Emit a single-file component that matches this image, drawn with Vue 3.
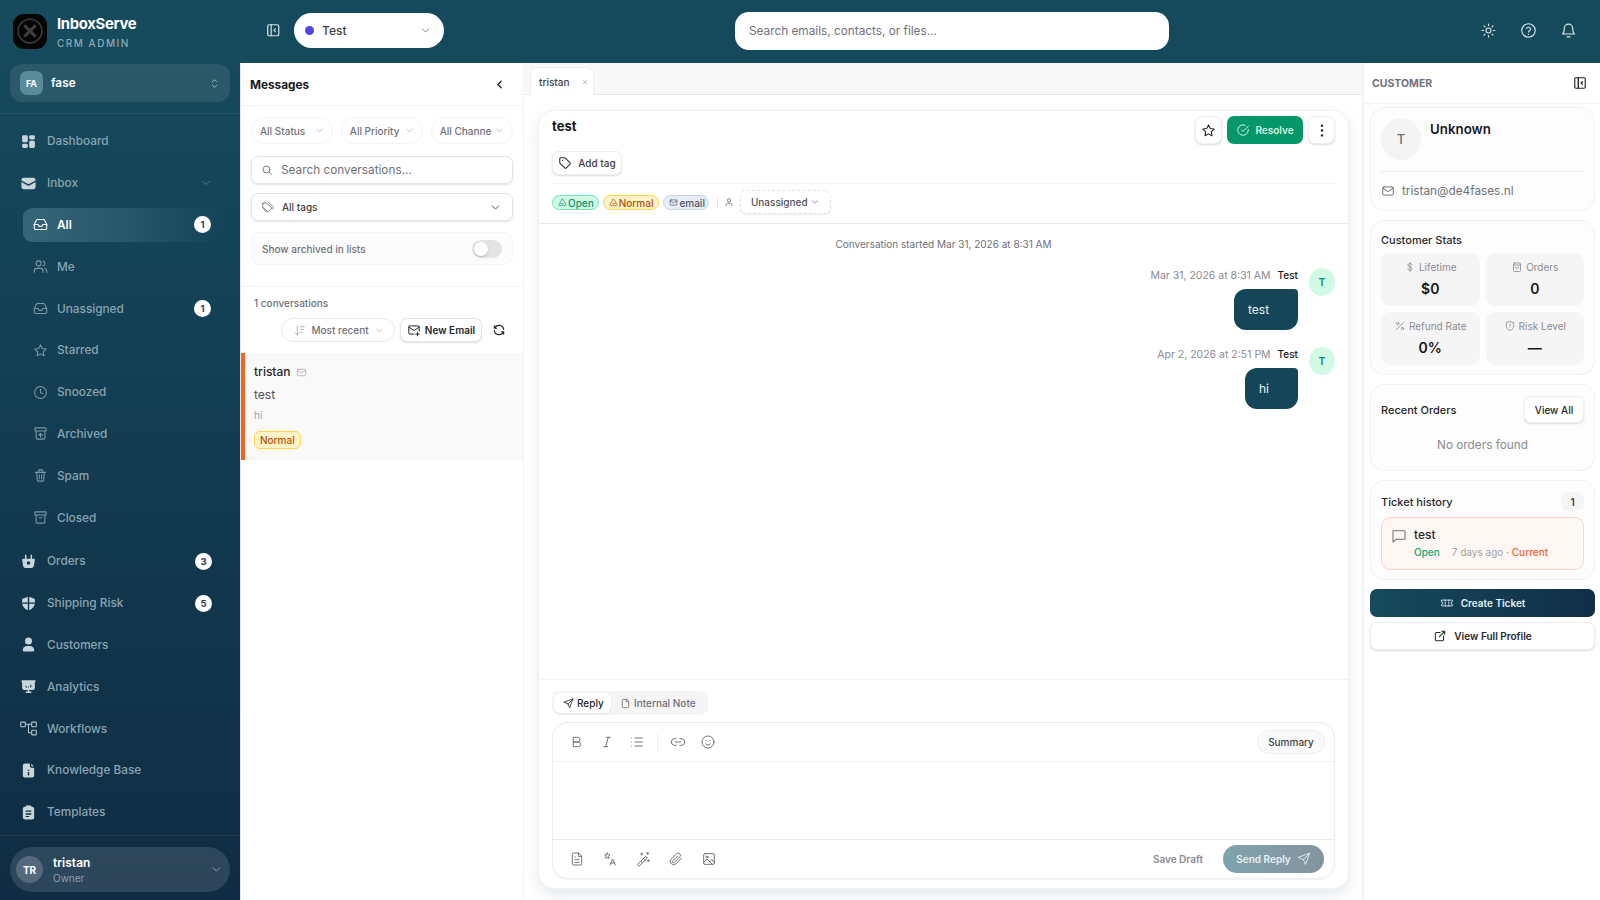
<script setup>
const icons = {
  chevDown: '<path d="M6 9l6 6 6-6"/>',
  chevLeft: '<path d="M15 6l-6 6 6 6"/>',
  upDown: '<path d="M8 9l4-4 4 4M8 15l4 4 4-4"/>',
  collapse: '<rect x="4" y="4" width="16" height="16" rx="2"/><path d="M9 4v16M15 10l-2 2 2 2"/>',
  sun: '<circle cx="12" cy="12" r="3.5"/><path d="M12 3v2M12 19v2M3 12h2M19 12h2M5.6 5.6l1.4 1.4M17 17l1.4 1.4M5.6 18.4L7 17M17 7l1.4-1.4"/>',
  help: '<circle cx="12" cy="12" r="9.5"/><path d="M9.2 9.2a2.9 2.9 0 0 1 5.6 1c0 2-2.8 2.4-2.8 4M12 17.5v.1"/>',
  bell: '<path d="M6 9a6 6 0 0 1 12 0c0 6 2.5 8 2.5 8h-17S6 15 6 9zM10 21h4"/>',
  search: '<circle cx="11" cy="11" r="7"/><path d="M21 21l-5-5"/>',
  tags: '<path d="M7.5 7h.01M3 6v5.2a2 2 0 0 0 .6 1.4l6.8 6.8a2 2 0 0 0 2.8 0l4.2-4.2a2 2 0 0 0 0-2.8L9.6 5.6A2 2 0 0 0 8.2 5H4a1 1 0 0 0-1 1z"/><path d="M3 13l6 7M13 4l7.5 7.5a2 2 0 0 1 0 2.8L19 16"/>',
  tag: '<path d="M7.5 7.5h.01M3 5v6.2a2 2 0 0 0 .6 1.4l7.8 7.8a2 2 0 0 0 2.8 0l6.2-6.2a2 2 0 0 0 0-2.8L12.6 3.6A2 2 0 0 0 11.2 3H5a2 2 0 0 0-2 2z"/>',
  sort: '<path d="M8 4v16M4 16l4 4 4-4M14 5h7M14 10h5M14 15h3"/>',
  mailPlus: '<path d="M12 19H5a2 2 0 0 1-2-2V7a2 2 0 0 1 2-2h14a2 2 0 0 1 2 2v7"/><path d="M3 7l9 6 9-6M18 16v6M15 19h6"/>',
  refresh: '<path d="M20 11A8.1 8.1 0 0 0 4.5 9M4 5v4h4M4 13a8.1 8.1 0 0 0 15.5 2M20 19v-4h-4"/>',
  mail: '<rect x="3" y="5" width="18" height="14" rx="2"/><path d="M3 7l9 6 9-6"/>',
  x: '<path d="M6 6l12 12M18 6L6 18"/>',
  star: '<polygon points="12 3 14.8 8.8 21 9.7 16.5 14.1 17.6 20.4 12 17.4 6.4 20.4 7.5 14.1 3 9.7 9.2 8.8"/>',
  check: '<path d="M21 11v1a9 9 0 1 1-5.3-8.2"/><path d="M9 11.5l3 3L21.5 5"/>',
  triangle: '<path d="M10.3 4.3L2.6 17.5A2 2 0 0 0 4.3 20.5h15.4a2 2 0 0 0 1.7-3L13.7 4.3a2 2 0 0 0-3.4 0zM8 15h8"/>',
  user: '<circle cx="12" cy="8" r="4"/><path d="M5 21v-2a4 4 0 0 1 4-4h6a4 4 0 0 1 4 4v2"/>',
  send: '<path d="M21.5 2.5L14.5 21.5l-3.5-8.5-8.5-3.5zM21.5 2.5L11 13"/>',
  note: '<path d="M14 3H7a2 2 0 0 0-2 2v14a2 2 0 0 0 2 2h10a2 2 0 0 0 2-2V8zM14 3v5h5"/>',
  bold: '<path d="M7 5h6a3.5 3.5 0 0 1 0 7H7zM7 12h7a3.5 3.5 0 0 1 0 7H7z"/>',
  italic: '<path d="M11 5h6M7 19h6M14 5l-4 14"/>',
  list: '<path d="M9 6h11M9 12h11M9 18h11M4 6v.01M4 12v.01M4 18v.01"/>',
  link: '<path d="M9 17H7a5 5 0 0 1 0-10h2M15 7h2a5 5 0 0 1 0 10h-2M8 12h8"/>',
  smile: '<circle cx="12" cy="12" r="9"/><path d="M9 10v.01M15 10v.01M8.5 14.5a4 4 0 0 0 7 0"/>',
  fileText: '<path d="M14 3H7a2 2 0 0 0-2 2v14a2 2 0 0 0 2 2h10a2 2 0 0 0 2-2V8zM14 3v5h5M9 13h6M9 17h6M9 9h1"/>',
  lang: '<path d="M8 3l1.2 2.6L12 6l-2 2 .5 3L8 9.6 5.5 11l.5-3-2-2 2.8-.4zM12 21l4-9 4 9M13.5 18h5"/>',
  wand: '<path d="M4 20L16 8l2.5 2.5L6.5 22.5zM13 11l2.5 2.5M8 15l2.5 2.5M10 3v3M8.5 4.5h3M19 2v3M17.5 3.5h3M20 13v3M18.5 14.5h3"/>',
  clip: '<path d="M20 11l-8.5 8.5a5 5 0 0 1-7-7L13 4a3.4 3.4 0 0 1 4.8 4.8l-8.5 8.5a1.7 1.7 0 0 1-2.4-2.4L15 7.5"/>',
  image: '<rect x="4" y="4" width="16" height="16" rx="2"/><circle cx="9" cy="9" r="1.5"/><path d="M4 17l5-5 8 8M14 15l2-2 4 4"/>',
  ticket: '<path d="M3 7h18v3a2 2 0 0 0 0 4v3H3v-3a2 2 0 0 0 0-4zM9 7v2M9 11v2M9 15v2M15 7v2M15 11v2M15 15v2"/>',
  external: '<path d="M12 6H6a2 2 0 0 0-2 2v10a2 2 0 0 0 2 2h10a2 2 0 0 0 2-2v-6M11 13l9-9M15 4h5v5"/>',
  message: '<path d="M4 4h16a1 1 0 0 1 1 1v11a1 1 0 0 1-1 1H8l-5 4V5a1 1 0 0 1 1-1z"/>',
  dollar: '<path d="M16 7.5C16 6 14.5 5 12 5S8 6.2 8 8.2c0 4.3 8 2.8 8 7 0 2-1.7 3.3-4 3.3s-4-1.2-4-3M12 3v18"/>',
  bag: '<rect x="5" y="4" width="14" height="17" rx="2"/><path d="M5 8h14M9 12a3 3 0 0 0 6 0"/>',
  percent: '<path d="M19 5L5 19"/><circle cx="7" cy="7" r="2.5"/><circle cx="17" cy="17" r="2.5"/>',
  shield: '<path d="M12 3l7.5 2.5V11c0 5-3.2 8.5-7.5 10-4.3-1.5-7.5-5-7.5-10V5.5zM12 8v4M12 15.5v.1"/>',
  panelRight: '<rect x="3" y="3" width="18" height="18" rx="2"/><path d="M9 3v18M16 10l-2 2 2 2" stroke-width="2.4"/>',
  inbox: '<path d="M22 12h-6l-2 3h-4l-2-3H2"/><path d="M5.45 5.11L2 12v6a2 2 0 0 0 2 2h16a2 2 0 0 0 2-2v-6l-3.45-6.89A2 2 0 0 0 16.76 4H7.24a2 2 0 0 0-1.79 1.11z"/>',
  users: '<path d="M16 21v-2a4 4 0 0 0-4-4H6a4 4 0 0 0-4 4v2"/><circle cx="9" cy="7" r="4"/><path d="M22 21v-2a4 4 0 0 0-3-3.87M16 3.13a4 4 0 0 1 0 7.75"/>',
  clock: '<circle cx="12" cy="12" r="9.5"/><path d="M12 6.5V12l3.5 2"/>',
  archiveUp: '<rect x="3" y="3" width="18" height="5" rx="1"/><path d="M5 8v11a2 2 0 0 0 2 2h10a2 2 0 0 0 2-2V8M12 18v-6M9 15l3-3 3 3"/>',
  trash: '<path d="M4 7h16M9 7V4a1 1 0 0 1 1-1h4a1 1 0 0 1 1 1v3M6 7l.8 12a2 2 0 0 0 2 2h6.4a2 2 0 0 0 2-2L18 7M10 11v6M14 11v6"/>',
  archive: '<rect x="3" y="3" width="18" height="5" rx="1"/><path d="M5 8v11a2 2 0 0 0 2 2h10a2 2 0 0 0 2-2V8M10 12.5h4"/>',
  dashboard: '<rect x="3" y="3" width="8" height="10" rx="2"/><rect x="3" y="15" width="8" height="6" rx="2"/><rect x="13" y="3" width="8" height="6" rx="2"/><rect x="13" y="11" width="8" height="10" rx="2"/>',
  mailSolid: '<path d="M2 7a3 3 0 0 1 3-3h14a3 3 0 0 1 3 3v.6l-10 5.6L2 7.6z"/><path d="M2 10v7a3 3 0 0 0 3 3h14a3 3 0 0 0 3-3v-7l-10 5.6z"/>',
  basket: '<path fill-rule="evenodd" d="M7 2.5h2V8h6V2.5h2V8h2.5A1.5 1.5 0 0 1 21 9.7l-1.4 8.8A3 3 0 0 1 16.6 21H7.4a3 3 0 0 1-3-2.5L3 9.7A1.5 1.5 0 0 1 4.5 8H7zM12 11.5a2.5 2.5 0 1 0 0 5 2.5 2.5 0 0 0 0-5z"/>',
  shieldSolid: '<path d="M11 2.5v8H3V5.5zM13 2.5l8 3v5h-8zM3 12.5h8v9C7 20 4 17 3 12.5zM13 12.5h8c-1 4.5-4 7.5-8 9z"/>',
  userSolid: '<circle cx="12" cy="7" r="5"/><path d="M4 20a6 6 0 0 1 6-6h4a6 6 0 0 1 6 6 2 2 0 0 1-2 2H6a2 2 0 0 1-2-2z"/>',
  analytics: '<path fill-rule="evenodd" d="M3 3h18a1 1 0 0 1 1 1v1a1 1 0 0 1-1 1v8a3 3 0 0 1-3 3h-5v2h3v2H8v-2h3v-2H6a3 3 0 0 1-3-3V6a1 1 0 0 1-1-1V4a1 1 0 0 1 1-1zM8 11v2.5h1.5V11zM11.2 12v1.5h1.5V12zM14.5 9.5v4H16v-4z"/>',
  workflow: '<rect x="1" y="3" width="6.5" height="6.5" rx="1"/><rect x="16.5" y="3" width="6.5" height="6.5" rx="1"/><rect x="16.5" y="14.5" width="6.5" height="6.5" rx="1"/><path d="M7.5 6h9M12 6v12h4.5"/>',
  kb: '<path fill-rule="evenodd" d="M14 2H7a3 3 0 0 0-3 3v14a3 3 0 0 0 3 3h10a3 3 0 0 0 3-3V8h-4a2 2 0 0 1-2-2zM11 11h2v1.8h-2zM11 14h2v5h-2z"/><path d="M16 2.5V6h3.5z"/>',
  clipboard: '<path fill-rule="evenodd" d="M9 2h6a1 1 0 0 1 1 1v1h1a3 3 0 0 1 3 3v12a3 3 0 0 1-3 3H7a3 3 0 0 1-3-3V7a3 3 0 0 1 3-3h1V3a1 1 0 0 1 1-1zM8 9v2h8V9zM8 13v2h8v-2zM8 17v1.5h5V17z"/>'
}

const inboxItems = [
  { label: 'All', icon: 'inbox', badge: 1, active: true },
  { label: 'Me', icon: 'users' },
  { label: 'Unassigned', icon: 'inbox', badge: 1 },
  { label: 'Starred', icon: 'star' },
  { label: 'Snoozed', icon: 'clock' },
  { label: 'Archived', icon: 'archiveUp' },
  { label: 'Spam', icon: 'trash' },
  { label: 'Closed', icon: 'archive' }
]

const lowerNav = [
  { label: 'Orders', icon: 'basket', badge: 3, solid: true },
  { label: 'Shipping Risk', icon: 'shieldSolid', badge: 5, solid: true },
  { label: 'Customers', icon: 'userSolid', solid: true },
  { label: 'Analytics', icon: 'analytics', solid: true },
  { label: 'Workflows', icon: 'workflow' },
  { label: 'Knowledge Base', icon: 'kb', solid: true },
  { label: 'Templates', icon: 'clipboard', solid: true }
]

const filters = ['All Status', 'All Priority', 'All Channe']

const stats = [
  { label: 'Lifetime', icon: 'dollar', value: '$0' },
  { label: 'Orders', icon: 'bag', value: '0' },
  { label: 'Refund Rate', icon: 'percent', value: '0%' },
  { label: 'Risk Level', icon: 'shield', value: '—' }
]

const messages = [
  { time: 'Mar 31, 2026 at 8:31 AM', text: 'test', width: '64px' },
  { time: 'Apr 2, 2026 at 2:51 PM', text: 'hi', width: '53px' }
]
</script>

<template>
  <div class="app">
    <aside class="sidebar">
      <div class="brand">
        <div class="logo">
          <svg viewBox="0 0 24 24" class="logo-mark"><circle cx="12" cy="12" r="9.5"/><path d="M7.5 7.5l9 9M16.5 7.5l-9 9" stroke-width="2.4"/></svg>
        </div>
        <div>
          <div class="brand-name">InboxServe</div>
          <div class="brand-sub">CRM ADMIN</div>
        </div>
      </div>
      <div class="workspace">
        <span class="ws-avatar">FA</span>
        <span class="ws-name">fase</span>
        <svg class="ic ws-chev" viewBox="0 0 24 24" v-html="icons.upDown"></svg>
      </div>

      <nav class="nav">
        <a class="nav-item"><svg class="nav-ic solid" viewBox="0 0 24 24" v-html="icons.dashboard"></svg>Dashboard</a>
        <a class="nav-item">
          <svg class="nav-ic solid" viewBox="0 0 24 24" v-html="icons.mailSolid"></svg>Inbox
          <svg class="ic nav-chev" viewBox="0 0 24 24" v-html="icons.chevDown"></svg>
        </a>
        <a v-for="item in inboxItems" :key="item.label" class="nav-item sub" :class="{ active: item.active }">
          <svg class="sub-ic" viewBox="0 0 24 24" v-html="icons[item.icon]"></svg>{{ item.label }}
          <span v-if="item.badge" class="badge">{{ item.badge }}</span>
        </a>
        <a v-for="(item, i) in lowerNav" :key="item.label" class="nav-item" :class="{ first: i === 0 }">
          <svg class="nav-ic" :class="{ solid: item.solid }" viewBox="0 0 24 24" v-html="icons[item.icon]"></svg>{{ item.label }}
          <span v-if="item.badge" class="badge">{{ item.badge }}</span>
        </a>
      </nav>

      <div class="user-wrap">
        <div class="user">
          <span class="user-avatar">TR</span>
          <div class="user-text">
            <div class="user-name">tristan</div>
            <div class="user-role">Owner</div>
          </div>
          <svg class="ic user-chev" viewBox="0 0 24 24" v-html="icons.chevDown"></svg>
        </div>
      </div>
    </aside>

    <div class="content">
      <header class="topbar">
        <svg class="top-collapse" viewBox="0 0 24 24" v-html="icons.collapse"></svg>
        <div class="store">
          <span class="store-dot"></span>
          <span class="store-name">Test</span>
          <svg class="ic store-chev" viewBox="0 0 24 24" v-html="icons.chevDown"></svg>
        </div>
        <div class="top-search">Search emails, contacts, or files...</div>
        <div class="top-icons">
          <svg class="top-ic" viewBox="0 0 24 24" v-html="icons.sun"></svg>
          <svg class="top-ic" viewBox="0 0 24 24" v-html="icons.help"></svg>
          <svg class="top-ic" viewBox="0 0 24 24" v-html="icons.bell"></svg>
        </div>
      </header>

      <div class="panels">
        <section class="messages">
          <div class="msg-head">
            <span>Messages</span>
            <svg class="ic back" viewBox="0 0 24 24" v-html="icons.chevLeft"></svg>
          </div>
          <div class="msg-filters">
            <div class="filter-row">
              <div v-for="f in filters" :key="f" class="filter">
                <span class="filter-label">{{ f }}</span>
                <svg class="ic" viewBox="0 0 24 24" v-html="icons.chevDown"></svg>
              </div>
            </div>
            <div class="field">
              <svg class="ic field-ic" viewBox="0 0 24 24" v-html="icons.search"></svg>
              <span class="field-ph">Search conversations...</span>
            </div>
            <div class="field tags">
              <svg class="ic field-ic tag-ic" viewBox="0 0 24 24" v-html="icons.tags"></svg>
              <span>All tags</span>
              <svg class="ic tags-chev" viewBox="0 0 24 24" v-html="icons.chevDown"></svg>
            </div>
            <div class="archived">
              <span>Show archived in lists</span>
              <span class="toggle"><span class="knob"></span></span>
            </div>
          </div>
          <div class="list-head">
            <div class="count">1 conversations</div>
            <div class="list-actions">
              <div class="sort">
                <svg class="ic" viewBox="0 0 24 24" v-html="icons.sort"></svg>
                <span>Most recent</span>
                <svg class="ic" viewBox="0 0 24 24" v-html="icons.chevDown"></svg>
              </div>
              <button class="new-email">
                <svg class="ic" viewBox="0 0 24 24" v-html="icons.mailPlus"></svg>New Email
              </button>
              <svg class="ic refresh" viewBox="0 0 24 24" v-html="icons.refresh"></svg>
            </div>
          </div>
          <div class="conv">
            <div class="conv-name">tristan <svg class="ic" viewBox="0 0 24 24" v-html="icons.mail"></svg></div>
            <div class="conv-subject">test</div>
            <div class="conv-preview">hi</div>
            <span class="conv-tag">Normal</span>
          </div>
        </section>

        <main class="main">
          <div class="tabs">
            <div class="tab">tristan <svg class="ic" viewBox="0 0 24 24" v-html="icons.x"></svg></div>
          </div>
          <div class="card">
            <div class="card-head">
              <div class="title-row">
                <h2>test</h2>
                <div class="title-actions">
                  <button class="square"><svg class="ic" viewBox="0 0 24 24" v-html="icons.star"></svg></button>
                  <button class="resolve"><svg class="ic" viewBox="0 0 24 24" v-html="icons.check"></svg>Resolve</button>
                  <button class="square"><svg class="dots" viewBox="0 0 4 16"><circle cx="2" cy="2" r="1.5"/><circle cx="2" cy="8" r="1.5"/><circle cx="2" cy="14" r="1.5"/></svg></button>
                </div>
              </div>
              <button class="add-tag"><svg class="ic" viewBox="0 0 24 24" v-html="icons.tag"></svg>Add tag</button>
              <div class="meta-row">
                <span class="pill open"><svg class="ic" viewBox="0 0 24 24" v-html="icons.triangle"></svg>Open</span>
                <span class="pill normal"><svg class="ic" viewBox="0 0 24 24" v-html="icons.triangle"></svg>Normal</span>
                <span class="pill email"><svg class="ic" viewBox="0 0 24 24" v-html="icons.mail"></svg>email</span>
                <span class="meta-sep"></span>
                <svg class="ic meta-user" viewBox="0 0 24 24" v-html="icons.user"></svg>
                <span class="assign">Unassigned <svg class="ic" viewBox="0 0 24 24" v-html="icons.chevDown"></svg></span>
              </div>
            </div>

            <div class="thread">
              <div class="started">Conversation started Mar 31, 2026 at 8:31 AM</div>
              <div v-for="m in messages" :key="m.time" class="bubble-row">
                <div class="bubble-col">
                  <div class="bubble-meta"><span>{{ m.time }}</span><b>Test</b></div>
                  <div class="bubble" :style="{ width: m.width }">{{ m.text }}</div>
                </div>
                <span class="bubble-avatar">T</span>
              </div>
            </div>

            <div class="composer">
              <div class="seg">
                <span class="seg-item on"><svg class="ic" viewBox="0 0 24 24" v-html="icons.send"></svg>Reply</span>
                <span class="seg-item"><svg class="ic" viewBox="0 0 24 24" v-html="icons.note"></svg>Internal Note</span>
              </div>
              <div class="editor">
                <div class="toolbar">
                  <svg class="tool" viewBox="0 0 24 24" v-html="icons.bold"></svg>
                  <svg class="tool" viewBox="0 0 24 24" v-html="icons.italic"></svg>
                  <svg class="tool" viewBox="0 0 24 24" v-html="icons.list"></svg>
                  <span class="tool-sep"></span>
                  <svg class="tool" viewBox="0 0 24 24" v-html="icons.link"></svg>
                  <svg class="tool" viewBox="0 0 24 24" v-html="icons.smile"></svg>
                  <span class="summary">Summary</span>
                </div>
                <div class="editor-body"></div>
                <div class="editor-foot">
                  <svg class="tool" viewBox="0 0 24 24" v-html="icons.fileText"></svg>
                  <svg class="tool" viewBox="0 0 24 24" v-html="icons.lang"></svg>
                  <svg class="tool" viewBox="0 0 24 24" v-html="icons.wand"></svg>
                  <svg class="tool" viewBox="0 0 24 24" v-html="icons.clip"></svg>
                  <svg class="tool" viewBox="0 0 24 24" v-html="icons.image"></svg>
                  <span class="save-draft">Save Draft</span>
                  <button class="send">Send Reply <svg class="ic" viewBox="0 0 24 24" v-html="icons.send"></svg></button>
                </div>
              </div>
            </div>
          </div>
        </main>

        <aside class="customer">
          <div class="cust-head">
            <span>CUSTOMER</span>
            <svg class="ic" viewBox="0 0 24 24" v-html="icons.panelRight"></svg>
          </div>
          <div class="cust-body">
            <div class="box profile">
              <div class="profile-top">
                <span class="profile-avatar">T</span>
                <span class="profile-name">Unknown</span>
              </div>
              <div class="profile-mail"><svg class="ic" viewBox="0 0 24 24" v-html="icons.mail"></svg>tristan@de4fases.nl</div>
            </div>

            <div class="box stats">
              <div class="box-title">Customer Stats</div>
              <div class="stat-grid">
                <div v-for="s in stats" :key="s.label" class="stat">
                  <div class="stat-label"><svg class="ic" viewBox="0 0 24 24" v-html="icons[s.icon]"></svg>{{ s.label }}</div>
                  <div class="stat-value">{{ s.value }}</div>
                </div>
              </div>
            </div>

            <div class="box orders">
              <div class="orders-head">
                <span class="box-title">Recent Orders</span>
                <button class="view-all">View All</button>
              </div>
              <div class="no-orders">No orders found</div>
            </div>

            <div class="box history">
              <div class="history-head">
                <span class="box-title">Ticket history</span>
                <span class="history-count">1</span>
              </div>
              <div class="ticket">
                <svg class="ic" viewBox="0 0 24 24" v-html="icons.message"></svg>
                <div>
                  <div class="ticket-title">test</div>
                  <div class="ticket-meta"><span class="t-open">Open</span><span class="t-ago">7 days ago · </span><span class="t-cur">Current</span></div>
                </div>
              </div>
            </div>

            <button class="create"><svg class="ic" viewBox="0 0 24 24" v-html="icons.ticket"></svg>Create Ticket</button>
            <button class="profile-btn"><svg class="ic" viewBox="0 0 24 24" v-html="icons.external"></svg>View Full Profile</button>
          </div>
        </aside>
      </div>
    </div>
  </div>
</template>

<style>
html, body { margin: 0; background: #fff; }
</style>

<style scoped>
* { box-sizing: border-box; }
button { font-family: inherit; cursor: pointer; }
.app {
  display: flex;
  width: 1600px;
  height: 900px;
  overflow: hidden;
  font-family: Inter, "Noto Sans", sans-serif;
  color: #18181b;
  background: #154a5d;
}
.ic {
  width: 16px;
  height: 16px;
  flex: none;
  fill: none;
  stroke: currentColor;
  stroke-width: 2;
  stroke-linecap: round;
  stroke-linejoin: round;
}

/* sidebar */
.sidebar {
  width: 240px;
  flex: none;
  display: flex;
  flex-direction: column;
  background: linear-gradient(180deg, #164b5e 0%, #0f2c44 100%);
}
.brand {
  height: 64px;
  flex: none;
  display: flex;
  align-items: center;
  gap: 10px;
  padding: 0 13px 2px;
}
.logo {
  width: 34px;
  height: 35px;
  border-radius: 11px;
  background: #050505;
  display: flex;
  align-items: center;
  justify-content: center;
}
.logo-mark {
  width: 30px;
  height: 30px;
  fill: none;
  stroke: #3d3d3d;
  stroke-width: 1.2;
}
.brand-name { font-size: 14.8px; font-weight: 700; color: #fff; letter-spacing: -0.3px; line-height: 20px; }
.brand-sub { font-size: 10px; font-weight: 500; color: #8fa9b3; letter-spacing: 1.5px; margin-top: 3px; line-height: 12px; }
.workspace {
  height: 38px;
  flex: none;
  margin: 0 10px 11px;
  padding: 0 10px;
  display: flex;
  align-items: center;
  gap: 8px;
  border-radius: 12px;
  background: rgba(255, 255, 255, .09);
  color: #fff;
}
.ws-avatar {
  width: 23px;
  height: 24px;
  border-radius: 7px;
  background: #5a8b98;
  font-size: 9px;
  font-weight: 700;
  display: flex;
  align-items: center;
  justify-content: center;
}
.ws-name { font-size: 11.8px; font-weight: 600; flex: 1; }
.ws-chev { width: 13px; height: 13px; stroke-width: 1.5; color: #b5c6cc; margin-right: -1px; }

.nav {
  flex: 1;
  min-height: 0;
  overflow-y: scroll;
  border-top: 1px solid rgba(255, 255, 255, .07);
  padding: 10px 0 90px;
  display: flex;
  flex-direction: column;
  gap: 7px;
}
.nav::-webkit-scrollbar { width: 6px; }
.nav::-webkit-scrollbar-track { background: #0f2c44; }
.nav::-webkit-scrollbar-thumb { background: #17495c; border-radius: 3px; }
.nav-item {
  height: 34.8px;
  flex: none;
  display: flex;
  align-items: center;
  padding: 0 28px 0 20px;
  font-size: 11.8px;
  font-weight: 500;
  color: #8aa4b0;
}
.nav-item.first { margin-top: 2px; }
.nav-ic {
  width: 17px;
  height: 17px;
  flex: none;
  margin-right: 10px;
  fill: none;
  stroke: #b3c4cb;
  stroke-width: 1.5;
}
.nav-ic.solid { fill: #c8d5da; stroke: none; }
.nav-chev { width: 12px; height: 12px; margin-left: auto; stroke-width: 1.5; color: #6d8e9b; }
.sub { margin-left: 23px; padding: 0 12px 0 9.5px; width: 200px; border-radius: 9px; }
.sub-ic {
  width: 15px;
  height: 15px;
  flex: none;
  margin-right: 9.5px;
  fill: none;
  stroke: #7d99a5;
  stroke-width: 1.7;
  stroke-linecap: round;
  stroke-linejoin: round;
}
.sub.active {
  background: linear-gradient(90deg, #366478 0%, #2a586c 45%, rgba(36, 80, 100, 0) 100%);
  color: #fff;
  font-weight: 600;
}
.sub.active .sub-ic { stroke: #fff; }
.badge {
  margin-left: auto;
  width: 17px;
  height: 17px;
  border-radius: 50%;
  background: #fff;
  color: #334155;
  font-size: 9.5px;
  font-weight: 700;
  display: flex;
  align-items: center;
  justify-content: center;
}
.user-wrap {
  height: 65px;
  flex: none;
  padding: 11px 10px 8px;
  border-top: 1px solid rgba(255, 255, 255, .07);
}
.user {
  height: 45px;
  padding: 0 6px;
  display: flex;
  align-items: center;
  gap: 10px;
  border-radius: 23px;
  background: rgba(255, 255, 255, .12);
}
.user-avatar {
  width: 27px;
  height: 27px;
  border-radius: 50%;
  background: #55697c;
  color: #fff;
  font-size: 10px;
  font-weight: 700;
  display: flex;
  align-items: center;
  justify-content: center;
}
.user-text { flex: 1; }
.user-name { font-size: 12px; font-weight: 600; color: #fff; line-height: 15px; }
.user-role { font-size: 10px; color: #8aa0ad; line-height: 14px; margin-top: 1px; }
.user-chev { width: 13px; height: 13px; stroke-width: 1.5; color: #a3b5bf; margin-right: 1px; }

/* top bar */
.content { flex: 1; min-width: 0; display: flex; flex-direction: column; }
.topbar {
  height: 63px;
  flex: none;
  display: flex;
  align-items: center;
  padding: 0 0 2px 25px;
  background: #154a5d;
}
.top-collapse {
  width: 16.5px;
  height: 16.5px;
  fill: none;
  stroke: #d5e0e4;
  stroke-width: 1.8;
  stroke-linecap: round;
  stroke-linejoin: round;
}
.store {
  width: 150px;
  height: 35px;
  margin-left: 12.5px;
  padding: 0 12px 0 11px;
  display: flex;
  align-items: center;
  border-radius: 18px;
  background: #fff;
}
.store-dot { width: 9px; height: 9px; border-radius: 50%; background: #4f46e5; }
.store-name { font-size: 12px; font-weight: 500; margin-left: 8px; flex: 1; color: #3f3f46; }
.store-chev { width: 13px; height: 13px; stroke-width: 1.5; color: #71717a; }
.top-search {
  width: 434px;
  height: 38px;
  margin-left: 291px;
  padding-left: 14px;
  display: flex;
  align-items: center;
  border-radius: 14px;
  background: #fff;
  font-size: 11.8px;
  color: #71717a;
}
.top-icons { display: flex; gap: 23px; margin-left: auto; margin-right: 23px; }
.top-ic {
  width: 17px;
  height: 17px;
  fill: none;
  stroke: #dbe5e8;
  stroke-width: 1.6;
  stroke-linecap: round;
  stroke-linejoin: round;
}
.panels { flex: 1; min-height: 0; display: flex; background: #fff; }

/* messages column */
.messages {
  width: 284px;
  flex: none;
  border-left: 1px solid #e4e7ea;
  border-right: 1px solid #f4f4f5;
  background: #fff;
}
.msg-head {
  height: 43px;
  padding: 1px 17px 0 9px;
  display: flex;
  align-items: center;
  justify-content: space-between;
  border-bottom: 1px solid #f4f4f5;
  font-size: 11.8px;
  font-weight: 700;
}
.back { width: 13px; height: 13px; stroke-width: 2.2; }
.msg-filters {
  height: 181px;
  padding: 11px 10px 0;
  border-bottom: 1px solid #f4f4f5;
}
.filter-row { display: flex; gap: 7.5px; }
.filter {
  flex: 1;
  height: 27px;
  min-width: 0;
  padding: 0 7px 0 8px;
  display: flex;
  align-items: center;
  gap: 2px;
  border: 1px solid #f4f4f5;
  border-radius: 14px;
  font-size: 10px;
  font-weight: 500;
  color: #71717a;
}
.filter-label { flex: 1; overflow: hidden; white-space: nowrap; }
.filter .ic { width: 11px; height: 11px; stroke-width: 1.5; color: #a1a1aa; }
.field {
  height: 28px;
  margin-top: 12px;
  padding: 0 10px;
  display: flex;
  align-items: center;
  border: 1px solid #e4e4e7;
  border-radius: 7px;
  box-shadow: 0 1px 2px rgba(0, 0, 0, .12);
  font-size: 11.8px;
}
.field-ic { width: 12px; height: 12px; margin-right: 8px; color: #71717a; stroke-width: 1.8; margin-left: -1px; }
.field-ph { color: #71717a; }
.tags { margin-top: 9px; font-size: 10px; font-weight: 500; color: #3f3f46; }
.tag-ic { width: 14px; height: 14px; margin-right: 7px; stroke-width: 1.5; }
.tags-chev { width: 13px; height: 13px; margin-left: auto; margin-right: 0; color: #52525b; stroke-width: 1.8; }
.archived {
  height: 33px;
  margin-top: 11px;
  padding: 0 10px;
  display: flex;
  align-items: center;
  justify-content: space-between;
  border: 1px solid #f4f4f5;
  border-radius: 9px;
  background: #fcfcfc;
  font-size: 10px;
  font-weight: 500;
  color: #71717a;
}
.toggle {
  width: 30px;
  height: 18px;
  padding: 2px;
  border-radius: 9px;
  background: #e4e4e7;
}
.knob {
  display: block;
  width: 14px;
  height: 14px;
  border-radius: 50%;
  background: #fff;
  box-shadow: 0 1px 2px rgba(0, 0, 0, .2);
}
.list-head { height: 66px; padding: 10px 10px 0 13px; }
.count { font-size: 10px; font-weight: 500; color: #71717a; line-height: 13px; }
.list-actions {
  display: flex;
  align-items: center;
  justify-content: flex-end;
  gap: 5px;
  margin-top: 8px;
}
.sort {
  width: 114px;
  height: 24px;
  padding: 0 9px 0 11px;
  display: flex;
  align-items: center;
  justify-content: space-between;
  border: 1px solid #e8e8ea;
  border-radius: 12px;
  font-size: 10px;
  font-weight: 500;
  color: #71717a;
}
.sort .ic { width: 11px; height: 11px; stroke-width: 1.5; color: #a1a1aa; }
.sort .ic:first-child { width: 13px; height: 13px; }
.new-email {
  width: 82px;
  height: 24px;
  display: flex;
  align-items: center;
  justify-content: center;
  gap: 4px;
  border: 1px solid #e4e4e7;
  border-radius: 7px;
  background: #fff;
  box-shadow: 0 1px 2px rgba(0, 0, 0, .12);
  font-size: 10px;
  font-weight: 600;
  color: #27272a;
  padding: 0;
}
.new-email .ic { width: 14px; height: 14px; stroke-width: 1.7; }
.refresh { width: 14px; height: 14px; margin: 0 7px 0 5px; color: #27272a; stroke-width: 2; }
.conv {
  height: 107px;
  padding: 11px 13px 0 9px;
  border-left: 4px solid #f2651f;
  background: #f9f9f9;
}
.conv-name {
  display: flex;
  align-items: center;
  gap: 5px;
  font-size: 12px;
  font-weight: 500;
  color: #27272a;
  line-height: 16px;
}
.conv-name .ic { width: 11px; height: 11px; stroke-width: 1.5; color: #a1a1aa; }
.conv-subject { font-size: 12px; color: #52525b; line-height: 16px; margin-top: 7px; }
.conv-preview { font-size: 10px; color: #a1a1aa; line-height: 14px; margin-top: 5px; }
.conv-tag {
  display: inline-block;
  margin-top: 9px;
  padding: 0 5px;
  height: 18px;
  line-height: 16px;
  border: 1px solid #fcd34d;
  border-radius: 6px;
  background: #fef3c7;
  font-size: 10px;
  font-weight: 500;
  color: #b45309;
}

/* conversation */
.main {
  flex: 1;
  min-width: 0;
  display: flex;
  flex-direction: column;
  background: #fff;
}
.tabs {
  height: 32px;
  flex: none;
  padding: 4px 0 0 6px;
  background: #f8f8f8;
  border-bottom: 1px solid #e8e8ea;
}
.tab {
  width: 64px;
  height: 28px;
  display: flex;
  align-items: center;
  gap: 12px;
  padding-left: 8px;
  border: 1px solid #efeff1;
  border-bottom: none;
  border-radius: 7px 7px 0 0;
  background: #fff;
  font-size: 10px;
  font-weight: 500;
  color: #3f3f46;
}
.tab .ic { width: 8px; height: 8px; color: #a1a1aa; }
.card {
  flex: 1;
  min-height: 0;
  margin: 15px 13px 11px 14px;
  display: flex;
  flex-direction: column;
  border: 1px solid #f1f1f3;
  border-radius: 16px;
  background: #fff;
  box-shadow: 0 6px 14px rgba(148, 163, 184, .24);
}
.card-head { height: 113px; flex: none; padding: 5px 13px 0; border-bottom: 1px solid #e8e8ea; }
.title-row { display: flex; align-items: center; justify-content: space-between; height: 28px; }
.title-row h2 { margin: 0; font-size: 13px; font-weight: 700; color: #18181b; position: relative; top: -4px; }
.title-actions { display: flex; gap: 5px; }
.square {
  width: 27px;
  height: 28px;
  padding: 0;
  display: flex;
  align-items: center;
  justify-content: center;
  border: 1px solid #eeeef0;
  border-radius: 7px;
  background: #fff;
  box-shadow: 0 1px 2px rgba(0, 0, 0, .14);
  color: #27272a;
}
.square .ic { width: 15px; height: 15px; stroke-width: 1.8; }
.dots { width: 4px; height: 13px; fill: #27272a; }
.resolve {
  width: 76px;
  height: 28px;
  padding: 0;
  display: flex;
  align-items: center;
  justify-content: center;
  gap: 5px;
  border: none;
  border-radius: 7px;
  background: #059669;
  color: #d6f5e8;
  font-size: 10px;
  font-weight: 600;
}
.resolve .ic { width: 14px; height: 14px; stroke-width: 1.7; }
.add-tag {
  width: 70px;
  height: 24px;
  margin-top: 7px;
  padding: 0;
  display: flex;
  align-items: center;
  justify-content: center;
  gap: 6px;
  border: 1px solid #eeeef0;
  border-radius: 7px;
  background: #fff;
  box-shadow: 0 1px 2px rgba(0, 0, 0, .14);
  font-size: 10px;
  font-weight: 500;
  color: #3f3f46;
}
.add-tag .ic { width: 14px; height: 14px; stroke-width: 1.8; color: #27272a; }
.meta-row {
  height: 39px;
  margin-top: 8px;
  padding-top: 10px;
  display: flex;
  align-items: flex-start;
  border-top: 1px solid #f4f4f5;
}
.pill {
  height: 15px;
  margin: 1px 4px 0 0;
  padding: 0 5px;
  display: flex;
  align-items: center;
  gap: 1px;
  border: 1px solid;
  border-radius: 8px;
  font-size: 10px;
  font-weight: 500;
}
.pill .ic { width: 9px; height: 9px; stroke-width: 1.8; }
.open { background: #d1fae5; border-color: #6ee7b7; color: #059669; padding-right: 4px; }
.normal { background: #fef3c7; border-color: #fcd34d; color: #b45309; }
.email { background: #e8edf5; border-color: #cbd5e1; color: #475569; padding-right: 3px; }
.meta-sep { width: 1px; height: 10px; margin: 4px 6px 0 4px; background: #e4e4e7; }
.meta-user { width: 10px; height: 10px; margin: 3px 6px 0 0; color: #71717a; stroke-width: 2; }
.assign {
  height: 24px;
  margin-top: -4px;
  padding: 0 10px;
  display: flex;
  align-items: center;
  gap: 2px;
  border: 1px dashed #e4e4e7;
  border-radius: 7px;
  box-shadow: 0 1px 2px rgba(0, 0, 0, .08);
  font-size: 10px;
  font-weight: 500;
  color: #52525b;
}
.assign .ic { width: 10px; height: 10px; stroke-width: 1.8; color: #71717a; }
.thread { flex: 1; min-height: 0; padding: 14px 13px 0; }
.started { text-align: center; font-size: 10px; color: #71717a; line-height: 13px; margin-bottom: 18px; }
.bubble-row { display: flex; justify-content: flex-end; gap: 11px; height: 79px; }
.bubble-col { display: flex; flex-direction: column; align-items: flex-end; }
.bubble-meta { display: flex; gap: 7px; font-size: 10.5px; color: #8b8b93; line-height: 13px; }
.bubble-meta b { font-weight: 500; color: #18181b; font-size: 10px; }
.bubble {
  height: 41px;
  margin-top: 7px;
  padding-left: 14px;
  display: flex;
  align-items: center;
  border-radius: 12px 4px 12px 12px;
  background: #154559;
  color: #eef4f6;
  font-size: 12px;
}
.bubble-avatar {
  width: 26px;
  height: 28px;
  margin-top: -1px;
  border-radius: 50%;
  background: #d1fae5;
  color: #0d8a7a;
  font-size: 10.5px;
  font-weight: 600;
  display: flex;
  align-items: center;
  justify-content: center;
}
.composer { height: 209px; flex: none; padding: 11px 13px 0; border-top: 1px solid #f4f4f5; }
.seg {
  width: 156px;
  height: 24px;
  padding: 2px;
  display: flex;
  border-radius: 8px;
  background: #f5f5f5;
}
.seg-item {
  display: flex;
  align-items: center;
  gap: 3px;
  padding: 0 6px 0 9px;
  font-size: 10px;
  font-weight: 500;
  color: #71717a;
}
.seg-item.on {
  width: 57px;
  padding: 0 0 0 9px;
  border-radius: 6px;
  background: #fff;
  color: #27272a;
  box-shadow: 0 1px 2px rgba(0, 0, 0, .08);
}
.seg-item .ic { width: 11px; height: 11px; stroke-width: 1.8; }
.editor {
  height: 157px;
  margin-top: 7px;
  display: flex;
  flex-direction: column;
  border: 1px solid #ececee;
  border-radius: 16px;
  box-shadow: 0 1px 2px rgba(0, 0, 0, .06);
}
.toolbar {
  height: 39px;
  flex: none;
  padding: 0 9px 0 16px;
  display: flex;
  align-items: center;
  gap: 14px;
  border-bottom: 1px solid #f0f0f2;
}
.tool {
  width: 16px;
  height: 16px;
  flex: none;
  fill: none;
  stroke: #71717a;
  stroke-width: 1.5;
  stroke-linecap: round;
  stroke-linejoin: round;
}
.tool-sep { width: 1px; height: 17px; background: #eeeef0; margin: 0 -2px; }
.summary {
  margin-left: auto;
  width: 68px;
  height: 24px;
  display: flex;
  align-items: center;
  justify-content: center;
  border: 1px solid #eeeef0;
  border-radius: 12px;
  background: #fafafa;
  font-size: 10px;
  font-weight: 500;
  color: #3f3f46;
}
.editor-body { flex: 1; }
.editor-foot {
  height: 39px;
  flex: none;
  padding: 0 10px 0 16px;
  display: flex;
  align-items: center;
  gap: 17px;
  border-top: 1px solid #ececee;
}
.save-draft { margin-left: auto; font-size: 10px; font-weight: 600; color: #8b8b93; }
.send {
  width: 101px;
  height: 28px;
  margin-left: 3px;
  padding: 0;
  display: flex;
  align-items: center;
  justify-content: center;
  gap: 6px;
  border: none;
  border-radius: 14px;
  background: linear-gradient(90deg, #7fa3ae, #84949f);
  color: #e9f0f2;
  font-size: 10px;
  font-weight: 600;
}
.send .ic { width: 14px; height: 14px; stroke-width: 1.5; }

/* customer column */
.customer {
  width: 238px;
  flex: none;
  border-left: 2px solid #f3f4f7;
  background: #fff;
}
.cust-head {
  height: 41px;
  padding: 0 13px 0 8px;
  display: flex;
  align-items: center;
  justify-content: space-between;
  border-bottom: 1px solid #f4f4f5;
  font-size: 10.5px;
  font-weight: 700;
  color: #71717a;
}
.cust-head .ic { width: 14px; height: 14px; color: #27272a; stroke-width: 2; }
.cust-body { padding: 3px 5px 0 6px; display: flex; flex-direction: column; gap: 9px; }
.box { border: 1px solid #f1f1f3; border-radius: 14px; background: #fdfdfd; }
.profile { height: 104px; padding: 10px 10px 0; }
.profile-top {
  height: 54px;
  display: flex;
  gap: 9px;
  border-bottom: 1px solid #efeff1;
}
.profile-avatar {
  width: 40px;
  height: 42px;
  border-radius: 50%;
  background: #f4f4f5;
  color: #71717a;
  font-size: 13px;
  font-weight: 500;
  display: flex;
  align-items: center;
  justify-content: center;
}
.profile-name { font-size: 13.3px; font-weight: 600; color: #18181b; line-height: 22px; }
.profile-mail {
  display: flex;
  align-items: center;
  gap: 7px;
  margin-top: 12px;
  font-size: 11.8px;
  color: #71717a;
}
.profile-mail .ic { width: 14px; height: 14px; stroke-width: 1.7; }
.box-title { font-size: 11px; font-weight: 500; color: #27272a; }
.stats { height: 155px; padding: 12px 10px 0; }
.stats .box-title { line-height: 15px; }
.stat-grid { display: grid; grid-template-columns: 1fr 1fr; gap: 6px 6px; margin-top: 5px; }
.stat {
  height: 53px;
  padding-top: 7px;
  border-radius: 9px;
  background: #f5f5f5;
  text-align: center;
}
.stat-label {
  display: flex;
  align-items: center;
  justify-content: center;
  gap: 3px;
  font-size: 10px;
  color: #8b8b93;
  line-height: 14px;
}
.stat-label .ic { width: 12px; height: 12px; stroke-width: 1.7; }
.stat-value { font-size: 14px; font-weight: 600; color: #18181b; line-height: 18px; margin-top: 6px; }
.orders { height: 87px; padding: 11px 10px 0; }
.orders-head { display: flex; align-items: center; justify-content: space-between; height: 27px; }
.view-all {
  width: 60px;
  height: 27px;
  padding: 0;
  border: 1px solid #f1f1f3;
  border-radius: 7px;
  background: #fff;
  box-shadow: 0 1px 2px rgba(0, 0, 0, .14);
  font-size: 10px;
  font-weight: 500;
  color: #27272a;
}
.no-orders { text-align: center; font-size: 11.8px; color: #8b8b93; margin-top: 14px; line-height: 16px; }
.history { height: 100px; padding: 11px 10px 0; }
.history-head { display: flex; align-items: center; justify-content: space-between; height: 19px; }
.history-count {
  width: 23px;
  height: 19px;
  border-radius: 7px;
  background: #f5f5f5;
  font-size: 10px;
  font-weight: 600;
  color: #3f3f46;
  display: flex;
  align-items: center;
  justify-content: center;
}
.ticket {
  height: 53px;
  margin-top: 6px;
  padding: 9px 9px;
  display: flex;
  gap: 7px;
  border: 1px solid #fed7c3;
  border-radius: 9px;
  background: #fff7f3;
}
.ticket .ic { width: 16px; height: 16px; margin-top: 1px; color: #71717a; stroke-width: 1.6; }
.ticket-title { font-size: 12px; font-weight: 500; color: #27272a; line-height: 16px; }
.ticket-meta { font-size: 10px; line-height: 13px; margin-top: 3px; font-weight: 500; white-space: pre; }
.t-open { color: #10a777; }
.t-ago { color: #a1a1aa; font-weight: 400; margin-left: 12px; }
.t-cur { color: #f2651f; }
.create, .profile-btn {
  height: 28px;
  padding: 0;
  display: flex;
  align-items: center;
  justify-content: center;
  gap: 7px;
  border-radius: 7px;
  font-size: 10px;
  font-weight: 600;
}
.create {
  margin-top: 0;
  border: none;
  background: linear-gradient(90deg, #154a5d, #102e46);
  color: #e4edf0;
}
.create .ic { width: 14px; height: 14px; stroke-width: 1.5; }
.profile-btn {
  margin-top: -4px;
  border: 1px solid #eeeef0;
  background: #fff;
  box-shadow: 0 1px 2px rgba(0, 0, 0, .14);
  color: #27272a;
}
.profile-btn .ic { width: 14px; height: 14px; stroke-width: 1.8; }
</style>
